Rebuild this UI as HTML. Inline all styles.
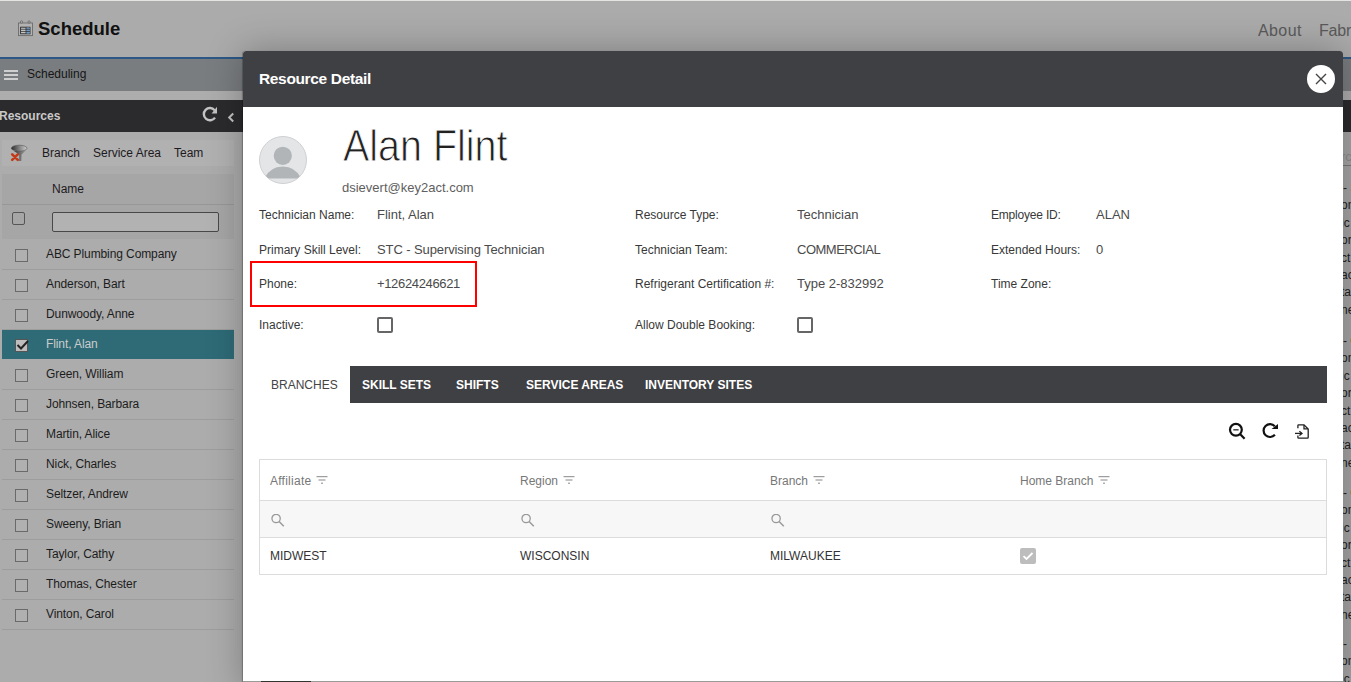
<!DOCTYPE html>
<html><head><meta charset="utf-8">
<style>
*{box-sizing:border-box;margin:0;padding:0}
html,body{width:1351px;height:682px;overflow:hidden;font-family:"Liberation Sans",sans-serif;background:#adadad;position:relative}
.a{position:absolute}
.t{position:absolute;white-space:nowrap;line-height:1}
#hdr{left:0;top:0;width:1351px;height:57px;background:#ababab;border-top:1px solid #e4e5e3}
#blue{left:0;top:57px;width:1351px;height:2px;background:#2b5886}
#sched{left:0;top:59px;width:1351px;height:32px;background:#7a7d80}
#resbar{left:0;top:100px;width:1351px;height:32px;background:#2b2b2d}
.cb{position:absolute;width:13px;height:13px;border:1px solid #6a6a6a;background:#b0b0b0}
.row{position:absolute;left:2px;width:232px;height:30px;border-bottom:1px solid #9d9d9d}
.row .t{left:44px;top:8px;font-size:12px;color:#1c1c1c;letter-spacing:-0.1px}
.row .cb{left:13px;top:9px}
#modal{left:243px;top:51px;width:1100px;height:631px;background:#fff;border-radius:3px 3px 0 0;overflow:hidden}
#mshadow{left:243px;top:51px;width:1100px;height:640px;border-radius:3px;box-shadow:-1px 0 1px rgba(0,0,0,0.25),0 0 36px rgba(0,0,0,0.28)}
#mhead{left:0;top:0;width:1100px;height:56px;background:#3f4044}
.lbl{position:absolute;white-space:nowrap;line-height:1;font-size:12px;color:#383838}
.val{position:absolute;white-space:nowrap;line-height:1;font-size:13px;color:#4a4a4a}
.mcb{position:absolute;width:16px;height:16px;border:2px solid #666;border-radius:2px;background:#fff}
.tab{position:absolute;white-space:nowrap;line-height:1;font-size:12px;font-weight:bold;color:#fff;top:13px}
.gh{position:absolute;white-space:nowrap;line-height:1;font-size:12px;color:#777;top:16px}
.gd{position:absolute;white-space:nowrap;line-height:1;font-size:12px;color:#333;top:14px}
</style></head><body>
<!-- page header -->
<div id="hdr" class="a"></div>
<svg class="a" style="left:17px;top:20px" width="17" height="17" viewBox="0 0 17 17">
  <rect x="1.5" y="3" width="14" height="12.6" fill="#b3b3b3" stroke="#6a6a6a" stroke-width="0.9"/>
  <circle cx="4.5" cy="2" r="1.1" fill="#c8c8c8" stroke="#555" stroke-width="0.7"/>
  <circle cx="12.1" cy="2" r="1.1" fill="#c8c8c8" stroke="#555" stroke-width="0.7"/>
  <rect x="3.6" y="7.2" width="9.4" height="6.6" fill="#c4c4c4" stroke="#2a2a2a" stroke-width="0.9"/>
  <rect x="9.2" y="7.6" width="3.4" height="5.8" fill="#6a9ccc"/>
  <line x1="3.6" y1="9.3" x2="13" y2="9.3" stroke="#2a2a2a" stroke-width="0.7"/>
  <line x1="3.6" y1="11.5" x2="13" y2="11.5" stroke="#2a2a2a" stroke-width="0.7"/>
  <line x1="9" y1="7.2" x2="9" y2="13.8" stroke="#2a2a2a" stroke-width="0.8"/>
</svg>
<div class="t" style="left:38px;top:20px;font-size:18.5px;font-weight:bold;color:#111">Schedule</div>
<div class="t" style="left:1258px;top:23px;font-size:16px;color:#5a5a5a;letter-spacing:0.4px">About</div>
<div class="t" style="left:1319px;top:23px;font-size:16px;color:#5a5a5a;letter-spacing:-0.2px">Fabri</div>
<div id="blue" class="a"></div>
<div id="sched" class="a"></div>
<div class="a" style="left:4px;top:70px;width:14px;height:2px;background:#cfcfcf"></div>
<div class="a" style="left:4px;top:74px;width:14px;height:2px;background:#cfcfcf"></div>
<div class="a" style="left:4px;top:78px;width:14px;height:2px;background:#cfcfcf"></div>
<div class="t" style="left:27px;top:68px;font-size:12px;color:#151515">Scheduling</div>

<!-- resources bar -->
<div id="resbar" class="a"></div>
<div class="t" style="left:-1px;top:110px;font-size:12px;font-weight:bold;color:#c9c9c9">Resources</div>
<svg class="a" style="left:200px;top:104px" width="20" height="20" viewBox="0 0 20 20">
  <path d="M14.6 6.2 A6.1 6.1 0 1 0 15 13.6" fill="none" stroke="#c4c4c4" stroke-width="2.4"/>
  <path d="M17 2.8 L17 9.4 L11.6 9.4 Z" fill="#c4c4c4"/>
</svg>
<svg class="a" style="left:226px;top:111px" width="10" height="13" viewBox="0 0 10 13">
  <path d="M7.2 2.5 L3.2 6.5 L7.2 10.5" fill="none" stroke="#c4c4c4" stroke-width="2"/>
</svg>

<!-- left panel -->
<div class="a" style="left:0;top:132px;width:243px;height:550px;background:#acacac"></div>
<div class="a" style="left:2px;top:140px;width:232px;height:26px;background:#b1b1b1"></div>
<svg class="a" style="left:10px;top:144px" width="19" height="19" viewBox="0 0 19 19">
  <defs><linearGradient id="fg" x1="0" x2="1" y1="0" y2="0"><stop offset="0" stop-color="#2e2e2e"/><stop offset="0.55" stop-color="#8a8a8a"/><stop offset="1" stop-color="#cfcfcf"/></linearGradient>
  <linearGradient id="sg" x1="0" x2="1"><stop offset="0" stop-color="#3a3a3a"/><stop offset="1" stop-color="#9a9a9a"/></linearGradient></defs>
  <path d="M4 7 L15.5 7 L11.6 10.5 L11.3 17 L9.2 17 L9.2 10.5 Z" fill="url(#sg)"/>
  <ellipse cx="9.2" cy="4.2" rx="7.8" ry="3" fill="url(#fg)" stroke="#555" stroke-width="0.6"/>
  <path d="M2.2 10.3 L7.8 15.9 M7.8 10.3 L2.2 15.9" stroke="#c23a18" stroke-width="2.6" stroke-linecap="round"/>
</svg>
<div class="t" style="left:42px;top:147px;font-size:12px;color:#1e1a22">Branch</div>
<div class="t" style="left:93px;top:147px;font-size:12px;color:#1e1a22">Service Area</div>
<div class="t" style="left:174px;top:147px;font-size:12px;color:#1e1a22">Team</div>

<div class="a" style="left:2px;top:174px;width:232px;height:65px;background:#a6a6a6"></div>
<div class="a" style="left:2px;top:204px;width:232px;height:1px;background:#979797"></div>
<div class="t" style="left:52px;top:183px;font-size:12px;color:#1e1a22">Name</div>
<div class="a" style="left:12px;top:212px;width:13px;height:13px;border:1px solid #555;border-radius:2px"></div>
<div class="a" style="left:52px;top:212px;width:167px;height:20px;border:1px solid #484848;border-radius:2px;background:#b2b2b2"></div>

<div id="rows">
<div class="row" style="top:240px"><div class="cb"></div><div class="t">ABC Plumbing Company</div></div>
<div class="row" style="top:270px"><div class="cb"></div><div class="t">Anderson, Bart</div></div>
<div class="row" style="top:300px"><div class="cb"></div><div class="t">Dunwoody, Anne</div></div>
<div class="row" style="top:330px;background:#2e6b77;border-bottom-color:#2e6b77;height:29px"><div class="cb" style="background:#bdbdbd;border-color:#555">
  <svg style="position:absolute;left:0;top:-1px" width="13" height="13" viewBox="0 0 13 13"><path d="M1.5 6 L5 9.5 L12 2" fill="none" stroke="#222" stroke-width="2"/></svg></div><div class="t" style="color:#cbcbcb">Flint, Alan</div></div>
<div class="row" style="top:360px"><div class="cb"></div><div class="t">Green, William</div></div>
<div class="row" style="top:390px"><div class="cb"></div><div class="t">Johnsen, Barbara</div></div>
<div class="row" style="top:420px"><div class="cb"></div><div class="t">Martin, Alice</div></div>
<div class="row" style="top:450px"><div class="cb"></div><div class="t">Nick, Charles</div></div>
<div class="row" style="top:480px"><div class="cb"></div><div class="t">Seltzer, Andrew</div></div>
<div class="row" style="top:510px"><div class="cb"></div><div class="t">Sweeny, Brian</div></div>
<div class="row" style="top:540px"><div class="cb"></div><div class="t">Taylor, Cathy</div></div>
<div class="row" style="top:570px"><div class="cb"></div><div class="t">Thomas, Chester</div></div>
<div class="row" style="top:600px"><div class="cb"></div><div class="t">Vinton, Carol</div></div>
</div>

<!-- right strip -->
<div class="a" style="left:1343px;top:132px;width:8px;height:550px;background:#a5a5a5;overflow:hidden">
  <div class="t" style="left:-2px;top:18px;font-size:13px;color:#8c8c8c">rc</div>
  <div class="a" style="left:0;top:33px;width:8px;height:1px;background:#777"></div>
  <div class="t" style="left:0px;top:50.0px;font-size:12px;color:#222"><span style="color:#222">-</span> <span style="color:#7a4a10">S</span></div>
  <div class="t" style="left:-2px;top:67.4px;font-size:12px;color:#222">om</div>
  <div class="t" style="left:-2px;top:84.8px;font-size:12px;color:#222">ic</div>
  <div class="t" style="left:-2px;top:102.2px;font-size:12px;color:#222">or</div>
  <div class="t" style="left:-2px;top:119.6px;font-size:12px;color:#222">ct</div>
  <div class="t" style="left:-2px;top:137.0px;font-size:12px;color:#222">ac</div>
  <div class="t" style="left:-2px;top:154.4px;font-size:12px;color:#222">ta</div>
  <div class="t" style="left:-2px;top:171.8px;font-size:12px;color:#222">ne</div>
  <div class="t" style="left:0px;top:203.0px;font-size:12px;color:#222"><span style="color:#222">-</span> <span style="color:#7a4a10">C</span></div>
  <div class="t" style="left:-2px;top:220.4px;font-size:12px;color:#222">om</div>
  <div class="t" style="left:-2px;top:237.8px;font-size:12px;color:#222">ic</div>
  <div class="t" style="left:-2px;top:255.2px;font-size:12px;color:#222">or</div>
  <div class="t" style="left:-2px;top:272.6px;font-size:12px;color:#222">ct</div>
  <div class="t" style="left:-2px;top:290.0px;font-size:12px;color:#222">ac</div>
  <div class="t" style="left:-2px;top:307.4px;font-size:12px;color:#222">ta</div>
  <div class="t" style="left:-2px;top:324.8px;font-size:12px;color:#222">ne</div>
  <div class="t" style="left:0px;top:355.0px;font-size:12px;color:#222"><span style="color:#222">-</span> <span style="color:#7a4a10">C</span></div>
  <div class="t" style="left:-2px;top:372.4px;font-size:12px;color:#222">om</div>
  <div class="t" style="left:-2px;top:389.8px;font-size:12px;color:#222">ic</div>
  <div class="t" style="left:-2px;top:407.2px;font-size:12px;color:#222">or</div>
  <div class="t" style="left:-2px;top:424.6px;font-size:12px;color:#222">ct</div>
  <div class="t" style="left:-2px;top:442.0px;font-size:12px;color:#222">ac</div>
  <div class="t" style="left:-2px;top:459.4px;font-size:12px;color:#222">ta</div>
  <div class="t" style="left:-2px;top:476.8px;font-size:12px;color:#222">ne</div>
  <div class="t" style="left:0px;top:506.0px;font-size:12px;color:#222"><span style="color:#222">-</span> <span style="color:#222">I</span></div>
  <div class="t" style="left:-2px;top:523.4px;font-size:12px;color:#222">om</div>
  <div class="t" style="left:-2px;top:540.8px;font-size:12px;color:#222">ic</div>
  <div class="t" style="left:-2px;top:558.2px;font-size:12px;color:#222">or</div>
</div>

<!-- MODAL -->
<div id="mshadow" class="a"></div>
<div id="modal" class="a">
  <div id="mhead" class="a"></div>
  <div class="t" style="left:16px;top:20px;font-size:15.5px;font-weight:bold;color:#fff;letter-spacing:-0.35px">Resource Detail</div>
  <div class="a" style="left:1064px;top:14px;width:28px;height:28px;border-radius:50%;background:#fff"></div>

  <!-- avatar -->
  <svg class="a" style="left:16px;top:85px" width="48" height="48" viewBox="0 0 48 48">
    <defs><clipPath id="cc"><circle cx="24" cy="24" r="23.5"/></clipPath></defs>
    <circle cx="24" cy="24" r="23.5" fill="#e4e5e7" stroke="#cfd0d2" stroke-width="1"/>
    <g clip-path="url(#cc)">
      <circle cx="23.8" cy="19.8" r="9.1" fill="#b1b5b8"/>
      <path d="M5.2 42.4 Q11.3 30.6 23.8 30.6 Q36.3 30.6 42.3 42.4 Z" fill="#b1b5b8"/>
    </g>
  </svg>
  <div class="t" id="name" style="left:100px;top:73px;font-size:44px;color:#222;transform-origin:0 0;transform:scaleX(0.897);-webkit-text-stroke:0.9px #fff;paint-order:normal">Alan Flint</div>
  <div class="t" style="left:99px;top:130px;font-size:13px;color:#5e5e5e">dsievert@key2act.com</div>

  <div class="lbl" style="left:16px;top:158px">Technician Name:</div>
  <div class="val" style="left:134px;top:157px">Flint, Alan</div>
  <div class="lbl" style="left:16px;top:193px">Primary Skill Level:</div>
  <div class="val" style="left:134px;top:192px;letter-spacing:-0.1px">STC - Supervising Technician</div>
  <div class="lbl" style="left:16px;top:227px">Phone:</div>
  <div class="val" style="left:134px;top:226px;letter-spacing:-0.35px">+12624246621</div>
  <div class="lbl" style="left:16px;top:268px">Inactive:</div>
  <div class="mcb" style="left:134px;top:266px"></div>

  <div class="lbl" style="left:392px;top:158px">Resource Type:</div>
  <div class="val" style="left:554px;top:157px">Technician</div>
  <div class="lbl" style="left:392px;top:193px">Technician Team:</div>
  <div class="val" style="left:554px;top:192px;letter-spacing:-0.5px">COMMERCIAL</div>
  <div class="lbl" style="left:392px;top:227px">Refrigerant Certification #:</div>
  <div class="val" style="left:554px;top:226px">Type 2-832992</div>
  <div class="lbl" style="left:392px;top:268px">Allow Double Booking:</div>
  <div class="mcb" style="left:554px;top:266px"></div>

  <div class="lbl" style="left:748px;top:158px;letter-spacing:-0.2px">Employee ID:</div>
  <div class="val" style="left:853px;top:157px">ALAN</div>
  <div class="lbl" style="left:748px;top:193px">Extended Hours:</div>
  <div class="val" style="left:853px;top:192px">0</div>
  <div class="lbl" style="left:748px;top:227px">Time Zone:</div>

  <div class="a" style="left:7px;top:210px;width:227px;height:45.5px;border:2px solid #f00"></div>

  <!-- tabs -->
  <div class="a" style="left:16px;top:315px;width:1068px;height:37px">
    <div class="a" style="left:91px;top:0;width:977px;height:37px;background:#3f4044"></div>
    <div class="tab" style="left:12px;color:#444;font-weight:normal">BRANCHES</div>
    <div class="tab" style="left:103px">SKILL SETS</div>
    <div class="tab" style="left:197px">SHIFTS</div>
    <div class="tab" style="left:267px">SERVICE AREAS</div>
    <div class="tab" style="left:386px">INVENTORY SITES</div>
  </div>

  <!-- toolbar icons -->
  <svg class="a" style="left:984px;top:370px" width="20" height="20" viewBox="0 0 20 20">
    <circle cx="8.9" cy="8.8" r="5.9" fill="none" stroke="#111" stroke-width="2.2"/>
    <line x1="6.3" y1="8.8" x2="11.6" y2="8.8" stroke="#444" stroke-width="1.5"/>
    <line x1="13" y1="13" x2="17.6" y2="17.8" stroke="#111" stroke-width="2.2"/>
  </svg>
  <svg class="a" style="left:1017px;top:370px" width="20" height="20" viewBox="0 0 20 20">
    <path d="M14.8 5.2 A6.45 6.45 0 1 0 14.9 13.8" fill="none" stroke="#111" stroke-width="2.2"/>
    <path d="M18 3 L18 7.9 L11.6 7.9 Z" fill="#111"/>
  </svg>
  <svg class="a" style="left:1049px;top:370px" width="20" height="20" viewBox="0 0 20 20">
    <path d="M5.9 7.3 V4.6 Q5.9 3.9 6.6 3.9 H12 L16.2 8.1 V16.5 Q16.2 17.2 15.5 17.2 H6.6 Q5.9 17.2 5.9 16.5 V14.4" fill="none" stroke="#222" stroke-width="1.3"/>
    <path d="M12 4 V7.9 H16" fill="none" stroke="#222" stroke-width="1.3"/>
    <line x1="3" y1="12.4" x2="10" y2="12.4" stroke="#222" stroke-width="1.3"/>
    <path d="M7.4 10.2 L10 12.4 L7.4 14.6" fill="none" stroke="#222" stroke-width="1.3"/>
  </svg>
  <!-- grid -->
  <div class="a" style="left:16px;top:408px;width:1068px;height:116px;border:1px solid #dcdcdc">
    <div class="a" style="left:0;top:40px;width:1066px;height:38px;background:#f7f7f7;border-top:1px solid #dcdcdc;border-bottom:1px solid #dcdcdc"></div>
  </div>
  <div class="t" style="left:27px;top:424px;font-size:12px;color:#777;letter-spacing:0.25px">Affiliate<svg style="margin-left:5px;vertical-align:0px" width="12" height="9" viewBox="0 0 12 9"><path d="M0.5 0.7 H11.5 M2.5 4 H9.5 M5 7.2 H7" stroke="#888" stroke-width="1"/></svg></div>
  <svg class="a" style="left:27px;top:463px" width="16" height="16" viewBox="0 0 16 16"><circle cx="6.1" cy="4.5" r="4.15" fill="none" stroke="#999" stroke-width="1.3"/><line x1="9.1" y1="7.5" x2="13.8" y2="12.2" stroke="#999" stroke-width="1.5"/></svg>
  <div class="t" style="left:27px;top:499px;font-size:12px;color:#333">MIDWEST</div>
  <div class="t" style="left:277px;top:424px;font-size:12px;color:#777">Region<svg style="margin-left:5px;vertical-align:0px" width="12" height="9" viewBox="0 0 12 9"><path d="M0.5 0.7 H11.5 M2.5 4 H9.5 M5 7.2 H7" stroke="#888" stroke-width="1"/></svg></div>
  <svg class="a" style="left:277px;top:463px" width="16" height="16" viewBox="0 0 16 16"><circle cx="6.1" cy="4.5" r="4.15" fill="none" stroke="#999" stroke-width="1.3"/><line x1="9.1" y1="7.5" x2="13.8" y2="12.2" stroke="#999" stroke-width="1.5"/></svg>
  <div class="t" style="left:277px;top:499px;font-size:12px;color:#333">WISCONSIN</div>
  <div class="t" style="left:527px;top:424px;font-size:12px;color:#777">Branch<svg style="margin-left:5px;vertical-align:0px" width="12" height="9" viewBox="0 0 12 9"><path d="M0.5 0.7 H11.5 M2.5 4 H9.5 M5 7.2 H7" stroke="#888" stroke-width="1"/></svg></div>
  <svg class="a" style="left:527px;top:463px" width="16" height="16" viewBox="0 0 16 16"><circle cx="6.1" cy="4.5" r="4.15" fill="none" stroke="#999" stroke-width="1.3"/><line x1="9.1" y1="7.5" x2="13.8" y2="12.2" stroke="#999" stroke-width="1.5"/></svg>
  <div class="t" style="left:527px;top:499px;font-size:12px;color:#333">MILWAUKEE</div>
  <div class="t" style="left:777px;top:424px;font-size:12px;color:#777">Home Branch<svg style="margin-left:5px;vertical-align:0px" width="12" height="9" viewBox="0 0 12 9"><path d="M0.5 0.7 H11.5 M2.5 4 H9.5 M5 7.2 H7" stroke="#888" stroke-width="1"/></svg></div>
  <div class="a" style="left:777px;top:497px;width:16px;height:16px;border-radius:2px;background:#bdbdbd"><svg style="position:absolute;left:0;top:0" width="16" height="16" viewBox="0 0 16 16"><path d="M3.5 8.2 L6.5 11 L12.5 5" fill="none" stroke="#fff" stroke-width="1.8"/></svg></div>
  <svg class="a" style="left:1072px;top:22px" width="12" height="12" viewBox="0 0 12 12"><path d="M1 1 L11 11 M11 1 L1 11" stroke="#444" stroke-width="1.4"/></svg>
</div>
<div class="a" style="left:243px;top:681px;width:1100px;height:1px;background:#9a9a9a"></div>
<div class="a" style="left:261px;top:681px;width:50px;height:1px;background:#333"></div>
</body></html>
